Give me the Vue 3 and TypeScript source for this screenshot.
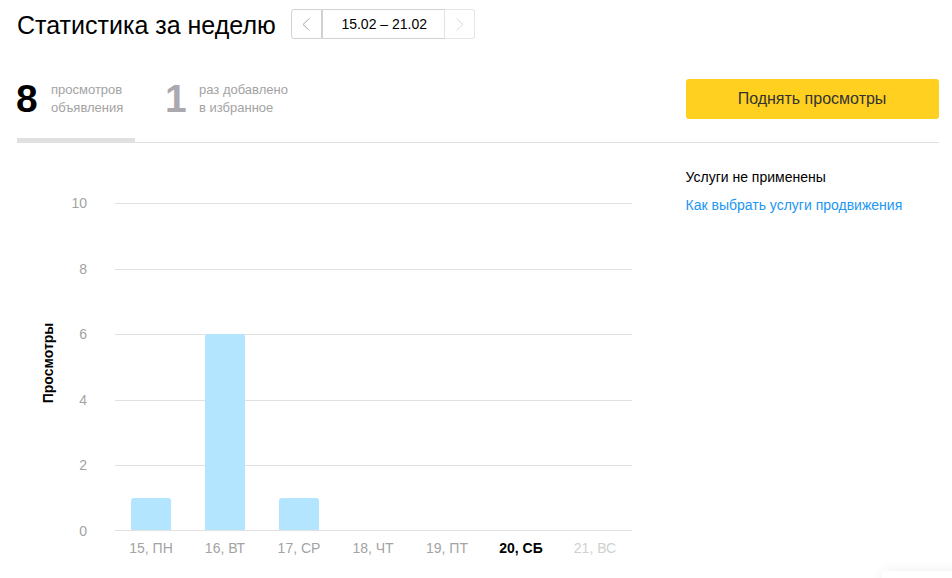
<script setup lang="ts">
const ticks = [10, 8, 6, 4, 2, 0]
const days = [
  { label: '15, ПН', value: 1, kind: '' },
  { label: '16, ВТ', value: 6, kind: '' },
  { label: '17, СР', value: 1, kind: '' },
  { label: '18, ЧТ', value: 0, kind: '' },
  { label: '19, ПТ', value: 0, kind: '' },
  { label: '20, СБ', value: 0, kind: 'today' },
  { label: '21, ВС', value: 0, kind: 'future' },
]
// one unit of value in px, rounded so the lines stay crisp
const valueY = (v: number) => Math.round(530.4 - v * 32.7)
const labelY = (v: number) => Math.round(531 - v * 32.8) + 5
const barX = (i: number) => 131 + i * 74
</script>

<template>
  <div class="page">
    <div class="head">
      <h1 class="title">Статистика за неделю</h1>
      <div class="range">
        <button class="range-btn prev">
          <svg width="8" height="13" viewBox="0 0 8 13"><path d="M7.5.5 1 6.5l6.5 6" fill="none" stroke="#a8a8a8" /></svg>
        </button>
        <div class="range-val">15.02 – 21.02</div>
        <button class="range-btn next">
          <svg width="8" height="13" viewBox="0 0 8 13"><path d="M.5.5 7 6.5l-6.5 6" fill="none" stroke="#d8d8d8" /></svg>
        </button>
      </div>
    </div>

    <div class="tabs">
      <div class="tab active">
        <span class="num">8</span>
        <span class="cap">просмотров<br />объявления</span>
      </div>
      <div class="tab second">
        <span class="num grey">1</span>
        <span class="cap">раз добавлено<br />в избранное</span>
      </div>
      <button class="raise">Поднять просмотры</button>
    </div>

    <div class="body">
      <svg class="chart" width="640" height="436" viewBox="0 143 640 436">
        <g v-for="t in ticks" :key="t">
          <line x1="115" x2="632" :y1="valueY(t) + 0.5" :y2="valueY(t) + 0.5" stroke="#e0e0e0" />
          <text class="tick" x="87" :y="labelY(t)" text-anchor="end">{{ t }}</text>
        </g>
        <template v-for="(d, i) in days" :key="d.label">
          <path
            v-if="d.value"
            :d="`M${barX(i)} 530V${valueY(d.value) + 3}q0-3 3-3h34q3 0 3 3V530z`"
            fill="#b3e5ff"
          />
          <text class="day" :class="d.kind" :x="barX(i) + 20" y="553" text-anchor="middle">{{ d.label }}</text>
        </template>
        <text class="axis" transform="translate(53 363) rotate(-90)" text-anchor="middle">Просмотры</text>
      </svg>
      <div class="side">
        <div class="side-title">Услуги не применены</div>
        <a class="side-link" href="#">Как выбрать услуги продвижения</a>
      </div>
    </div>

    <div class="peek"></div>
  </div>
</template>

<style scoped>
.page {
  position: relative;
  width: 952px;
  height: 578px;
  overflow: hidden;
  box-sizing: border-box;
  padding: 0 13px 0 17px;
  font-family: "Liberation Sans", Arial, sans-serif;
  background: #fff;
  color: #000;
}
.head {
  display: flex;
  align-items: center;
  height: 50px;
}
.title {
  margin: 0 15px 0 0;
  font-size: 25px;
  font-weight: 400;
  line-height: 30px;
}
.range {
  display: flex;
  height: 30px;
  margin-top: -2px;
}
.range-btn {
  box-sizing: border-box;
  background: none;
  display: flex;
  align-items: center;
  justify-content: center;
}
.prev {
  width: 31px;
  padding: 0 1px 0 0;
  border: 1px solid #d2d2d2;
  border-radius: 3px 0 0 3px;
}
.next {
  width: 30px;
  padding: 0 0 0 2px;
  border: 1px solid #e6e6e6;
  border-left: 0;
  border-radius: 0 3px 3px 0;
}
.range-val {
  width: 123px;
  box-sizing: border-box;
  padding-left: 2px;
  border: 1px solid #d2d2d2;
  border-right-color: #e2e2e2;
  text-align: center;
  font-size: 14px;
  line-height: 28px;
}
.tabs {
  display: flex;
  align-items: flex-start;
  height: 93px;
  border-bottom: 1px solid #e0e0e0;
  box-sizing: border-box;
}
.tab {
  display: flex;
  height: 93px;
  box-sizing: border-box;
  padding-top: 26px;
}
.active {
  width: 118px;
  border-bottom: 5px solid #e0e0e0;
}
.second {
  margin-left: 31px;
}
.num {
  font-size: 39px;
  font-weight: 700;
  line-height: 46px;
  width: 35px;
  margin-left: -1px;
}
.second .num {
  width: 34px;
}
.grey {
  color: #a9a9ae;
}
.cap {
  font-size: 13px;
  line-height: 18px;
  color: #a3a3a3;
  padding-top: 5px;
}
.raise {
  margin: 29px 0 0 auto;
  width: 253px;
  height: 40px;
  padding: 0 1px 0 0;
  border: 0;
  border-radius: 3px;
  background: #ffd020;
  color: #333;
  font-family: inherit;
  font-size: 16px;
}
.body {
  display: flex;
  margin-left: -17px;
}
.chart {
  display: block;
  width: 640px;
  flex: none;
}
.tick {
  font-size: 14px;
  fill: #a3a3a3;
}
.day {
  font-size: 14px;
  fill: #a3a3a3;
}
.today {
  fill: #000;
  font-weight: 700;
}
.future {
  fill: #d0d0d0;
}
.axis {
  font-size: 14px;
  font-weight: 700;
}
.side {
  margin-left: 45.5px;
  padding-top: 25px;
  font-size: 14px;
}
.side-title {
  line-height: 18px;
}
.side-link {
  display: block;
  margin-top: 10px;
  line-height: 18px;
  color: #2196f3;
  text-decoration: none;
}
/* corner of a floating card cut off by the window */
.peek {
  position: absolute;
  left: 882px;
  top: 571px;
  width: 120px;
  height: 60px;
  border-radius: 3px;
  background: #fff;
  box-shadow: 0 0 14px rgba(0, 0, 0, 0.07);
}
</style>

<style>
html,
body {
  margin: 0;
  background: #fff;
}
</style>
